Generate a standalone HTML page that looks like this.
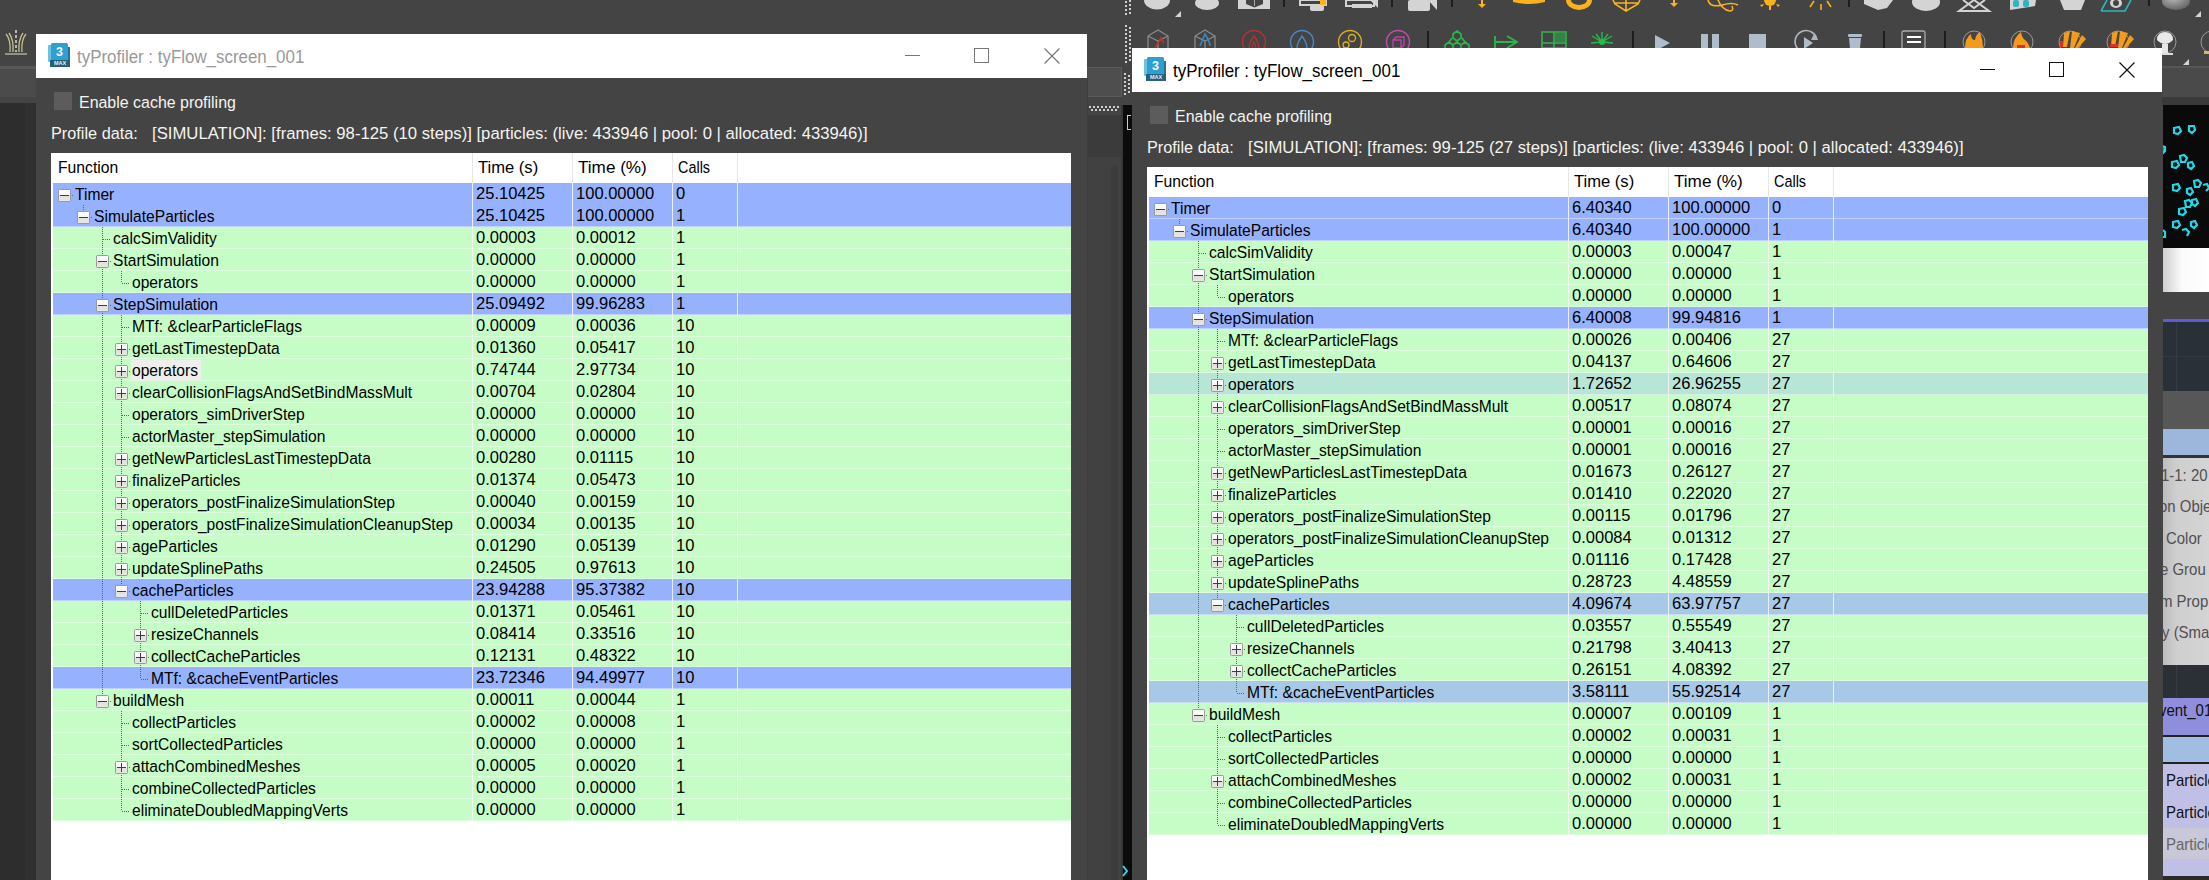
<!DOCTYPE html>
<html><head><meta charset="utf-8"><style>
*{margin:0;padding:0;box-sizing:border-box}
html,body{width:2209px;height:880px;overflow:hidden;background:#444;font-family:"Liberation Sans",sans-serif;position:relative}
.abs{position:absolute}
.win{position:absolute;background:#444;overflow:hidden}
.title{position:absolute;left:0;top:0;right:0;height:44px;background:#fff}
.logo{position:absolute;left:12px;top:9px;width:22px;height:24px}
.lg1{position:absolute;left:0;top:1.5px;width:5px;height:17px;background:#6cc0e0;border-radius:1px 0 0 1px}
.lg4{position:absolute;left:19px;top:4px;width:3px;height:20px;background:#2a7090}
.lg2{position:absolute;left:3px;top:0;width:17px;height:17.5px;background:#2d9fd0;color:#f4fbff;font-weight:bold;font-size:12.5px;text-align:center;line-height:19px;border-radius:1.5px 1.5px 0 0}
.lg3{position:absolute;left:2px;top:17px;width:20px;height:7px;background:#27607e;color:#e8f0f4;font-size:5.5px;font-weight:bold;text-align:center;line-height:7px}
.ttext{position:absolute;left:41px;top:12px;font-size:18.1px;line-height:22px;white-space:pre;transform:scaleX(.934);transform-origin:0 0}
.bmin{position:absolute;top:21px;width:15px;height:1px}
.bmax{position:absolute;top:14px;width:15px;height:15px;border:1px solid}
.bclose{position:absolute;top:14px}
.cb{position:absolute;left:18px;top:58px;width:18px;height:18px;background:#5c5c5c}
.cbl{position:absolute;left:42.5px;top:59px;font-size:16.8px;line-height:20px;color:#f4f4f0;white-space:pre;transform:scaleX(.95);transform-origin:0 0}
.pd{position:absolute;left:14.5px;top:89.5px;font-size:16.8px;line-height:20px;color:#f4f4f0;white-space:pre;transform:scaleX(.97);transform-origin:0 0}
.pd2{position:absolute;left:116px;top:89.5px;font-size:16.8px;line-height:20px;color:#f4f4f0;white-space:pre;transform:scaleX(.995);transform-origin:0 0}
.tbl{position:absolute;left:15px;top:119px;bottom:0;background:#fff;overflow:hidden}
.hdr{position:absolute;left:0;top:0;right:0;height:30px;background:#fff}
.htx{position:absolute;top:0;font-size:16.8px;line-height:29px;color:#000;white-space:pre;transform-origin:0 0}
.hs{position:absolute;top:0;width:1px;height:30px;background:#e6e6e6}
.colsep{position:absolute;top:30px;width:1px;height:638px;background:#f4f4f4;z-index:3;opacity:.9}
.row{position:absolute;left:2px;height:22px}
.sep{position:absolute;left:2px;height:1px;background:rgba(255,255,255,.4);z-index:1}
.tl{position:absolute;z-index:2}
.tl line{stroke:#5a6a5a;stroke-width:1;stroke-dasharray:1 1}
.bx{position:absolute;width:13px;height:13px;border:1px solid #9a9a9a;border-radius:1.5px;background:linear-gradient(#fefefe 0%,#f6f6f6 48%,#e2e0da 52%,#e8e6e0 100%);z-index:4}
.bx .h{position:absolute;left:1.25px;top:5px;width:8.5px;height:1.15px;background:#3a3c50}
.bx .v{position:absolute;left:4.95px;top:1.25px;width:1.15px;height:8.5px;background:#3a3c50}
.tx{position:absolute;height:22px;line-height:22px;color:#000;white-space:pre;z-index:5}
.focus{position:absolute;background:#ecefea;z-index:1}
.nm{font-size:16.8px;transform:scaleX(.93);transform-origin:0 0}
.rtx{font-size:17px;line-height:22px;color:#505050;white-space:pre;transform:scaleX(.88);transform-origin:0 0}
.num{font-size:16.8px;transform:scaleX(.985);transform-origin:0 0}
</style></head><body>
<!-- left strip -->
<div class="abs" style="left:0;top:66px;width:36px;height:3px;background:#575757"></div>
<div class="abs" style="left:0;top:69px;width:36px;height:28px;background:#4b4b4b"></div>
<div class="abs" style="left:0;top:97px;width:36px;height:6px;background:#454545"></div>
<div class="abs" style="left:0;top:103px;width:36px;height:777px;background:#2d2d2d"></div>
<div class="abs" style="left:25px;top:103px;width:11px;height:777px;background:#303030"></div>
<svg class="abs" style="left:0;top:28px" width="36" height="30">
 <g stroke="#c8c08a" stroke-width="1.3" fill="none">
  <path d="M6 6 Q11 12 10 24"/><path d="M9 5 Q14 12 13 24"/><path d="M26 6 Q21 12 22 24"/><path d="M23 5 Q18 12 19 24"/>
 </g>
 <path d="M16 2 V24" stroke="#ddd" stroke-width="1.5" stroke-dasharray="3 2"/>
 <path d="M5 26 H27" stroke="#c8c8b0" stroke-width="1.2"/>
</svg>
<!-- middle strip -->
<div class="abs" style="left:1087px;top:67px;width:35px;height:30px;background:#4e4e4e;border:1px solid #5a5a5a;border-left:none"></div>
<div class="abs" style="left:1087px;top:97px;width:35px;height:18px;background:#444"></div>
<div class="abs" style="left:1087px;top:115px;width:35px;height:42px;background:#3b3b3b"></div>
<div class="abs" style="left:1087px;top:157px;width:35px;height:723px;background:#414141"></div>
<div class="abs" style="left:1111px;top:165px;width:7px;height:715px;background:#3c3c3c;border-radius:3px"></div>
<div class="abs" style="left:1087px;top:78px;width:1px;height:802px;background:#3e3e3e"></div>
<div class="abs" style="left:1121px;top:105px;width:2px;height:775px;background:#373737"></div>
<div class="abs" style="left:1123px;top:105px;width:9px;height:775px;background:#0b0b0b"></div>
<div class="abs" style="left:1127px;top:115px;width:4px;height:15px;border:1px solid #ccc;border-right:none"></div>
<svg class="abs" style="left:0;top:0" width="1140" height="120"><path fill="#cfcfcf" d="M1125 1h2v2h-2zM1125 5h2v2h-2zM1125 9h2v2h-2zM1125 13h2v2h-2zM1129 0h2v2h-2zM1129 4h2v2h-2zM1129 8h2v2h-2zM1129 12h2v2h-2zM1125 25h2v2h-2zM1125 29h2v2h-2zM1125 33h2v2h-2zM1125 37h2v2h-2zM1125 41h2v2h-2zM1125 45h2v2h-2zM1125 49h2v2h-2zM1125 53h2v2h-2zM1125 57h2v2h-2zM1125 61h2v2h-2zM1129 27h2v2h-2zM1129 31h2v2h-2zM1129 35h2v2h-2zM1129 39h2v2h-2zM1129 43h2v2h-2zM1129 47h2v2h-2zM1129 51h2v2h-2zM1129 55h2v2h-2zM1129 59h2v2h-2zM1124 73h2v2h-2zM1124 77h2v2h-2zM1124 81h2v2h-2zM1124 85h2v2h-2zM1124 89h2v2h-2zM1124 93h2v2h-2zM1128 75h2v2h-2zM1128 79h2v2h-2zM1128 83h2v2h-2zM1128 87h2v2h-2zM1128 91h2v2h-2zM1089 106h2v2h-2zM1093 106h2v2h-2zM1097 106h2v2h-2zM1101 106h2v2h-2zM1105 106h2v2h-2zM1109 106h2v2h-2zM1113 106h2v2h-2zM1117 106h2v2h-2zM1091 109h2v2h-2zM1095 109h2v2h-2zM1099 109h2v2h-2zM1103 109h2v2h-2zM1107 109h2v2h-2zM1111 109h2v2h-2zM1115 109h2v2h-2z"/></svg>
<svg class="abs" style="left:1120px;top:864px" width="10" height="14"><path d="M3 2 L7 7 L3 12" stroke="#2ad8e8" stroke-width="2" fill="none"/></svg>
<!-- right strip -->
<div class="abs" style="left:2162px;top:66px;width:47px;height:2px;background:#565656"></div>
<div class="abs" style="left:2162px;top:68px;width:47px;height:29px;background:#4a4a4a"></div>
<div class="abs" style="left:2162px;top:97px;width:47px;height:8px;background:#3a3a3a"></div>
<div class="abs" style="left:2163px;top:105px;width:46px;height:143px;background:#0a0a0a"></div>
<svg class="abs" style="left:2163px;top:105px" width="46" height="143">
 <g stroke="#22d8e8" stroke-width="2.2" fill="none">
  <path d="M11 23l5-1 2 4-3 3-4-1z"/><path d="M26 21l5 0 1 4-3 3-3-2z"/>
  <path d="M-1 41l3 1 0 4-2 2z"/><path d="M9 57l5-1 2 4-3 3-4-1z"/><path d="M17 51l4-1 3 3-2 4-4 0z"/><path d="M25 58l4-1 2 4-3 3-3-2z"/>
  <path d="M10 80l5-1 2 4-3 3-4-1z"/><path d="M24 84l4-1 2 4-3 3-3-2z"/><path d="M31 76l4-1 3 3-2 4-4 0z"/><path d="M40 80l4-1 2 4-3 3"/>
  <path d="M16 104l5-1 2 4-3 3-4-1z"/><path d="M22 96l4-1 3 3-2 4-4 0z"/><path d="M29 95l4-1 2 4-3 3-3-2z"/>
  <path d="M10 117l5-1 2 4-3 3-4-1z"/><path d="M28 117l4-1 2 4-3 3-3-2z"/><path d="M19 125l4-1 3 3-2 4"/>
  <path d="M0 125l2 2 0 5-2 0"/>
 </g>
</svg>
<div class="abs" style="left:2163px;top:248px;width:46px;height:44px;background:linear-gradient(90deg,#cfcfcf,#fafafa 40%,#fff)"></div>
<div class="abs" style="left:2162px;top:292px;width:47px;height:27px;background:#444"></div>
<div class="abs" style="left:2163px;top:319px;width:46px;height:3px;background:#5f5ad8"></div>
<div class="abs" style="left:2163px;top:322px;width:46px;height:69px;background:#2a3037"></div>
<div class="abs" style="left:2176px;top:322px;width:1px;height:69px;background:#343b42"></div>
<div class="abs" style="left:2163px;top:356px;width:46px;height:1px;background:#343b42"></div>
<div class="abs" style="left:2163px;top:391px;width:46px;height:38px;background:#575757"></div>
<div class="abs" style="left:2163px;top:429px;width:46px;height:26px;background:#9cb6dc"></div>
<div class="abs" style="left:2163px;top:455px;width:46px;height:3px;background:#333"></div>
<div class="abs" style="left:2163px;top:458px;width:46px;height:207px;background:linear-gradient(90deg,#bdbdbd,#cfcfcf 30%,#d4d4d4)"></div>
<div class="abs rtx" style="top:465px;left:2161px">1-1: 20</div>
<div class="abs rtx" style="top:496px;left:2159px">on Obje</div>
<div class="abs rtx" style="top:528px;left:2166px">Color</div>
<div class="abs rtx" style="top:559px;left:2160px">e Grou</div>
<div class="abs rtx" style="top:591px;left:2160px">m Prop</div>
<div class="abs rtx" style="top:622px;left:2162px">y (Sma</div>
<div class="abs" style="left:2163px;top:665px;width:46px;height:33px;background:#2b3037"></div>
<div class="abs" style="left:2176px;top:665px;width:1px;height:33px;background:#343b42"></div>
<div class="abs" style="left:2163px;top:698px;width:46px;height:37px;background:#8e8edc"></div>
<div class="abs rtx" style="top:700px;left:2159px;color:#111">vent_01</div>
<div class="abs" style="left:2163px;top:735px;width:46px;height:2px;background:#222"></div>
<div class="abs" style="left:2163px;top:737px;width:46px;height:25px;background:#a2bde2"></div>
<div class="abs" style="left:2163px;top:762px;width:46px;height:2px;background:#222"></div>
<div class="abs" style="left:2163px;top:764px;width:46px;height:112px;background:#c0c0e6"></div>
<div class="abs" style="left:2163px;top:828px;width:46px;height:31px;background:#c8c8d8"></div>
<div class="abs rtx" style="top:770px;left:2166px;color:#111">Particle</div>
<div class="abs rtx" style="top:802px;left:2166px;color:#111">Particle</div>
<div class="abs rtx" style="top:834px;left:2166px;color:#666">Particle</div>
<div class="abs" style="left:2163px;top:876px;width:46px;height:4px;background:#2a2a2a"></div>

<!-- toolbar -->
<svg class="abs" style="left:1086px;top:0" width="1123" height="70">
 <g transform="translate(-1086,0)">
 <g fill="#d4d4d4">
  <ellipse cx="1157" cy="0" rx="13" ry="9.5"/>
  <path d="M1175 17 L1181 11 L1181 17z"/>
  <ellipse cx="1207" cy="3" rx="12" ry="7"/>
  <rect x="1238" y="0" width="32" height="9"/>
  <path d="M1300 0h26v5h-26z" fill="none" stroke="#d4d4d4" stroke-width="2"/>
  <rect x="1310" y="5" width="14" height="6" rx="2"/>
  <path d="M1346 0h28v6h-28z" fill="none" stroke="#d4d4d4" stroke-width="2"/>
  <path d="M1352 4h20v4h-20z"/><path d="M1370 0l8 8v-8z"/>
  <rect x="1408" y="0" width="22" height="11" rx="2"/><path d="M1428 0l9 10v-10z"/>
  <path d="M1864 0h29l-6 8-9 2-14-6z"/>
  <ellipse cx="1926" cy="2" rx="14" ry="9"/>
  <path d="M2060 0h25l-4 10h-17z"/>
  <path d="M2195 17 L2201 11 L2201 17z"/>
  <path d="M2183 65 L2189 59 L2189 65z"/>
 </g>
 <path d="M1246 0h17v4l-8.5 3.5-8.5-3.5z" fill="#444"/>
 <path d="M1254.5 0 v6" stroke="#aaa" stroke-width="1"/>
 <rect x="1320" y="0" width="6" height="5" fill="#fbb21c"/>
 <g stroke="#111" stroke-width="1.5"><path d="M1284 0v7M1392 0v7M1452 0v7M1849 0v7M2149 0v6M1428 31v17M1633 31v17M1884 31v17M1945 31v17"/></g>
 <g fill="#fbb21c" stroke="none">
  <path d="M1481 0h2v4h3l-4 4-4-4h3z"/>
  <path d="M1513 0h32v2q-16 4-32 0z"/>
  <path d="M1566 0a13 10 0 0 0 26 0h-5a8 5 0 0 1-16 0z"/>
  <path d="M1673 0h2v3h3l-4 4-4-4h3z"/>
  <circle cx="1770" cy="0" r="6"/>
  <path d="M1760 5l4-1-2 3zM1780 5l-4-1 2 3zM1769 6h2v4h-2z"/>
 </g>
 <g stroke="#fbb21c" stroke-width="1.6" fill="none">
  <path d="M1613 0l2 4 11 7 12-7 2-4M1626 0v11M1615 3h23"/>
  <path d="M1708 0q2 8 14 5q10-3 16 0 M1718 0q4 10 12 11 q4 0 2-5"/>
  <path d="M1810 7l4-6M1821 10v-6M1831 7l-4-6"/>
 </g>
 <path d="M1959 11 L1974 0 L1989 11z M1963 0 l11 8 11-8" stroke="#d4d4d4" stroke-width="2" fill="none"/>
 <path d="M2010 0h26l-1 6-25 4z" fill="#d4d4d4"/><rect x="2013" y="0" width="6" height="7" rx="2" fill="#2fb5c0"/><rect x="2023" y="0" width="6" height="7" rx="2" fill="#2fb5c0"/>
 <path d="M2101 11 l6 -11 M2101 11 h24 l6 -11" stroke="#2fb5c0" stroke-width="1.6" fill="none"/><ellipse cx="2116" cy="3" rx="6" ry="5" fill="#d4d4d4"/><ellipse cx="2116" cy="3" rx="3" ry="3" fill="#444"/>
 <radialGradient id="sph" cx="0.4" cy="0.3" r="0.7"><stop offset="0" stop-color="#bbb"/><stop offset="1" stop-color="#666"/></radialGradient>
 <ellipse cx="2176" cy="1" rx="14" ry="9" fill="url(#sph)"/>
 <!-- row 2 -->
 <g fill="none" stroke-width="1.3">
  <path d="M1148 36l10-6 10 6v14M1148 36v14M1148 36l10 5 10-5M1158 41v9" stroke="#8a8a8a"/>
  <path d="M1155 48l6-10 3 5" stroke="#c0322a" stroke-width="1.6"/>
  <path d="M1195 36l10-6 10 6v14M1195 36v14M1195 36l10 5 10-5M1205 41v9" stroke="#8a8a8a"/>
  <path d="M1200 46q5-12 5-12q5 8 5 12" stroke="#3a84c8" stroke-width="1.6"/>
  <circle cx="1254" cy="42" r="11.5" stroke="#b83232" stroke-width="1.4"/><path d="M1249 50q0-8 5-14q5 6 5 14M1252 50q0-5 2-8q2 3 2 8" stroke="#b83232" stroke-width="1.3"/>
  <circle cx="1302" cy="42" r="11.5" stroke="#4a88c8" stroke-width="1.4"/><path d="M1297 48q0-5 5-12q5 7 5 12q-5 4-10 0" stroke="#4a88c8" stroke-width="1.3"/>
  <circle cx="1350" cy="42" r="11.5" stroke="#d8b020" stroke-width="1.4"/><circle cx="1352" cy="38" r="3.5" stroke="#e0b020"/><circle cx="1346" cy="45" r="3" stroke="#e0b020"/>
  <circle cx="1398" cy="42" r="11.5" stroke="#c050a8" stroke-width="1.4"/><path d="M1393 40h8v8h-8zM1393 40l3-3h8v8l-3 3" stroke="#c040b0"/>
  <path d="M1457 31l4 3v4l-4 3-4-3v-4zM1449 42l4 3v4l-4 3-4-3v-4zM1457 42l4 3v4l-4 3-4-3v-4zM1465 42l4 3v4l-4 3-4-3v-4zM1452 38l-3 4M1462 38l3 4" stroke="#2ab84a" stroke-width="1.6"/>
  <path d="M1495 36v12M1495 42h22M1507 36l10 6-10 6" stroke="#2ab84a" stroke-width="1.8"/>
  <path d="M1542 32h24v16h-24zM1554 32v16M1542 43h24" stroke="#2ab84a" stroke-width="1.6"/>
  <path d="M1602 32v10M1592 36l10 6M1612 36l-10 6M1591 43l11-1M1613 43l-11-1M1596 34l6 8M1608 34l-6 8" stroke="#2ab84a" stroke-width="1.4"/>
 </g>
 <rect x="1555" y="33" width="10" height="9" fill="#2ab84a" opacity=".5"/><circle cx="1602" cy="42" r="3" fill="#2ab84a"/>
 <g fill="#aebccb">
  <path d="M1655 35l15 8-15 8z"/>
  <rect x="1701" y="34" width="7" height="14"/><rect x="1712" y="34" width="7" height="14"/>
  <rect x="1749" y="34" width="17" height="14"/>
  <path d="M1804 37l9 6-9 6z"/>
  <rect x="1848" y="34" width="14" height="3" rx="1"/><path d="M1849 38h12l-1 10h-10z"/>
 </g>
 <path d="M1817 40a11 11 0 1 0 -2 8" stroke="#aeb6bf" stroke-width="1.6" fill="none"/><path d="M1814 34l4 6-7 0z" fill="#aeb6bf"/>
 <rect x="1902" y="31" width="23" height="18" rx="2" fill="none" stroke="#aaa" stroke-width="1.3"/>
 <path d="M1907 37h14M1907 42h14" stroke="#fff" stroke-width="2"/>
 <g>
  <circle cx="1974" cy="42" r="11" fill="none" stroke="#999" stroke-width="1"/><path d="M1965 48q0-10 6-14q0 6 4 6q1-6 5-8q3 8 3 16z" fill="#f59a1a"/>
  <circle cx="2022" cy="42" r="11" fill="none" stroke="#999" stroke-width="1"/><path d="M2013 48q0-10 8-16q1 6 4 8q3 2 5 8z" fill="#f59a1a"/><rect x="2017" y="45" width="8" height="3" fill="#e03020"/>
  <circle cx="2070" cy="42" r="11" fill="none" stroke="#999" stroke-width="1"/><path d="M2064 33l6 -2-3 16h-4zM2072 31l8 2-6 15h-4zM2082 35l4 4-8 9h-3z" fill="#f59a1a"/><rect x="2060" y="41" width="3" height="6" fill="#e03020"/>
  <circle cx="2118" cy="42" r="11" fill="none" stroke="#999" stroke-width="1"/><path d="M2112 33l6 -2-3 16h-4zM2120 31l8 2-6 15h-4zM2130 35l4 4-8 9h-3z" fill="#f59a1a"/><rect x="2110" y="44" width="8" height="3" fill="#e03020"/>
  <circle cx="2165" cy="42" r="11" fill="none" stroke="#999" stroke-width="1"/><path d="M2157 40q0-8 8-8q8 0 8 8q-4 4-8 4q-4 0-8-4zM2162 44h6v9h-6z" fill="#e8e8e8"/><rect x="2157" y="53" width="16" height="2" fill="#ddd"/>
  <circle cx="2212" cy="42" r="11" fill="none" stroke="#999" stroke-width="1"/><rect x="2204" y="51" width="6" height="3" fill="#d8b070"/>
 </g>
 </g>
</svg>

<div class="win" style="left:36px;top:34px;width:1051px;height:846px">
<div class="title"><div class="logo"><div class="lg1"></div><div class="lg4"></div><div class="lg2">3</div><div class="lg3">MAX</div></div>
<div class="ttext" style="color:#999">tyProfiler : tyFlow_screen_001</div>
<div class="bmin" style="background:#777;left:869px"></div>
<div class="bmax" style="border-color:#777;left:938px"></div>
<svg class="bclose" style="left:1008px" width="16" height="16"><path d="M0.5 0.5L15.5 15.5M15.5 0.5L0.5 15.5" stroke="#777" stroke-width="1.2"/></svg>
</div>
<div class="cb"></div><div class="cbl">Enable cache profiling</div>
<div class="pd">Profile data:</div><div class="pd2">[SIMULATION]: [frames: 98-125 (10 steps)] [particles: (live: 433946 | pool: 0 | allocated: 433946)]</div>
<div class="tbl" style="width:1020px">
<div class="hdr"><div class="htx" style="left:7px;transform:scaleX(.936)">Function</div><div class="hs" style="left:421px"></div>
<div class="htx" style="left:427px;transform:scaleX(.988)">Time (s)</div><div class="hs" style="left:521px"></div>
<div class="htx" style="left:527px;transform:scaleX(1.02)">Time (%)</div><div class="hs" style="left:621px"></div>
<div class="htx" style="left:627px;transform:scaleX(.86)">Calls</div><div class="hs" style="left:686px"></div></div>
<div class="colsep" style="left:421px"></div><div class="colsep" style="left:521px"></div><div class="colsep" style="left:621px"></div><div class="colsep" style="left:686px"></div>
<div class="row" style="top:30px;background:#96b2ff;width:1018px"></div>
<div class="row" style="top:52px;background:#96b2ff;width:1018px"></div>
<div class="sep" style="top:73px;width:1018px"></div>
<div class="row" style="top:74px;background:#c6fdc6;width:1018px"></div>
<div class="sep" style="top:95px;width:1018px"></div>
<div class="row" style="top:96px;background:#c6fdc6;width:1018px"></div>
<div class="sep" style="top:117px;width:1018px"></div>
<div class="row" style="top:118px;background:#c6fdc6;width:1018px"></div>
<div class="sep" style="top:139px;width:1018px"></div>
<div class="row" style="top:140px;background:#96b2ff;width:1018px"></div>
<div class="sep" style="top:161px;width:1018px"></div>
<div class="row" style="top:162px;background:#c6fdc6;width:1018px"></div>
<div class="sep" style="top:183px;width:1018px"></div>
<div class="row" style="top:184px;background:#c6fdc6;width:1018px"></div>
<div class="sep" style="top:205px;width:1018px"></div>
<div class="row" style="top:206px;background:#c6fdc6;width:1018px"></div>
<div class="sep" style="top:227px;width:1018px"></div>
<div class="row" style="top:228px;background:#c6fdc6;width:1018px"></div>
<div class="sep" style="top:249px;width:1018px"></div>
<div class="row" style="top:250px;background:#c6fdc6;width:1018px"></div>
<div class="sep" style="top:271px;width:1018px"></div>
<div class="row" style="top:272px;background:#c6fdc6;width:1018px"></div>
<div class="sep" style="top:293px;width:1018px"></div>
<div class="row" style="top:294px;background:#c6fdc6;width:1018px"></div>
<div class="sep" style="top:315px;width:1018px"></div>
<div class="row" style="top:316px;background:#c6fdc6;width:1018px"></div>
<div class="sep" style="top:337px;width:1018px"></div>
<div class="row" style="top:338px;background:#c6fdc6;width:1018px"></div>
<div class="sep" style="top:359px;width:1018px"></div>
<div class="row" style="top:360px;background:#c6fdc6;width:1018px"></div>
<div class="sep" style="top:381px;width:1018px"></div>
<div class="row" style="top:382px;background:#c6fdc6;width:1018px"></div>
<div class="sep" style="top:403px;width:1018px"></div>
<div class="row" style="top:404px;background:#c6fdc6;width:1018px"></div>
<div class="sep" style="top:425px;width:1018px"></div>
<div class="row" style="top:426px;background:#96b2ff;width:1018px"></div>
<div class="sep" style="top:447px;width:1018px"></div>
<div class="row" style="top:448px;background:#c6fdc6;width:1018px"></div>
<div class="sep" style="top:469px;width:1018px"></div>
<div class="row" style="top:470px;background:#c6fdc6;width:1018px"></div>
<div class="sep" style="top:491px;width:1018px"></div>
<div class="row" style="top:492px;background:#c6fdc6;width:1018px"></div>
<div class="sep" style="top:513px;width:1018px"></div>
<div class="row" style="top:514px;background:#96b2ff;width:1018px"></div>
<div class="sep" style="top:535px;width:1018px"></div>
<div class="row" style="top:536px;background:#c6fdc6;width:1018px"></div>
<div class="sep" style="top:557px;width:1018px"></div>
<div class="row" style="top:558px;background:#c6fdc6;width:1018px"></div>
<div class="sep" style="top:579px;width:1018px"></div>
<div class="row" style="top:580px;background:#c6fdc6;width:1018px"></div>
<div class="sep" style="top:601px;width:1018px"></div>
<div class="row" style="top:602px;background:#c6fdc6;width:1018px"></div>
<div class="sep" style="top:623px;width:1018px"></div>
<div class="row" style="top:624px;background:#c6fdc6;width:1018px"></div>
<div class="sep" style="top:645px;width:1018px"></div>
<div class="row" style="top:646px;background:#c6fdc6;width:1018px"></div>
<div class="sep" style="top:667px;width:1018px"></div>
<svg class="tl" width="460" height="668" style="left:0;top:0"><line x1="32.5" y1="52" x2="32.5" y2="64"/><line x1="51.5" y1="74" x2="51.5" y2="86"/><line x1="51.5" y1="86" x2="51.5" y2="108"/><line x1="70.5" y1="118" x2="70.5" y2="130"/><line x1="51.5" y1="108" x2="51.5" y2="152"/><line x1="70.5" y1="162" x2="70.5" y2="174"/><line x1="70.5" y1="174" x2="70.5" y2="196"/><line x1="70.5" y1="196" x2="70.5" y2="218"/><line x1="70.5" y1="218" x2="70.5" y2="240"/><line x1="70.5" y1="240" x2="70.5" y2="262"/><line x1="70.5" y1="262" x2="70.5" y2="284"/><line x1="70.5" y1="284" x2="70.5" y2="306"/><line x1="70.5" y1="306" x2="70.5" y2="328"/><line x1="70.5" y1="328" x2="70.5" y2="350"/><line x1="70.5" y1="350" x2="70.5" y2="372"/><line x1="70.5" y1="372" x2="70.5" y2="394"/><line x1="70.5" y1="394" x2="70.5" y2="416"/><line x1="70.5" y1="416" x2="70.5" y2="438"/><line x1="89.5" y1="448" x2="89.5" y2="460"/><line x1="89.5" y1="460" x2="89.5" y2="482"/><line x1="89.5" y1="482" x2="89.5" y2="504"/><line x1="89.5" y1="504" x2="89.5" y2="526"/><line x1="51.5" y1="152" x2="51.5" y2="548"/><line x1="70.5" y1="558" x2="70.5" y2="570"/><line x1="70.5" y1="570" x2="70.5" y2="592"/><line x1="70.5" y1="592" x2="70.5" y2="614"/><line x1="70.5" y1="614" x2="70.5" y2="636"/><line x1="70.5" y1="636" x2="70.5" y2="658"/><rect x="40" y="64" width="1" height="1" fill="#5a6a5a"/><line x1="52" y1="86.5" x2="60" y2="86.5"/><rect x="59" y="108" width="1" height="1" fill="#5a6a5a"/><line x1="71" y1="130.5" x2="79" y2="130.5"/><rect x="59" y="152" width="1" height="1" fill="#5a6a5a"/><line x1="71" y1="174.5" x2="79" y2="174.5"/><rect x="78" y="196" width="1" height="1" fill="#5a6a5a"/><rect x="78" y="218" width="1" height="1" fill="#5a6a5a"/><rect x="78" y="240" width="1" height="1" fill="#5a6a5a"/><line x1="71" y1="262.5" x2="79" y2="262.5"/><line x1="71" y1="284.5" x2="79" y2="284.5"/><rect x="78" y="306" width="1" height="1" fill="#5a6a5a"/><rect x="78" y="328" width="1" height="1" fill="#5a6a5a"/><rect x="78" y="350" width="1" height="1" fill="#5a6a5a"/><rect x="78" y="372" width="1" height="1" fill="#5a6a5a"/><rect x="78" y="394" width="1" height="1" fill="#5a6a5a"/><rect x="78" y="416" width="1" height="1" fill="#5a6a5a"/><rect x="78" y="438" width="1" height="1" fill="#5a6a5a"/><line x1="90" y1="460.5" x2="98" y2="460.5"/><rect x="97" y="482" width="1" height="1" fill="#5a6a5a"/><rect x="97" y="504" width="1" height="1" fill="#5a6a5a"/><line x1="90" y1="526.5" x2="98" y2="526.5"/><rect x="59" y="548" width="1" height="1" fill="#5a6a5a"/><line x1="71" y1="570.5" x2="79" y2="570.5"/><line x1="71" y1="592.5" x2="79" y2="592.5"/><rect x="78" y="614" width="1" height="1" fill="#5a6a5a"/><line x1="71" y1="636.5" x2="79" y2="636.5"/><line x1="71" y1="658.5" x2="79" y2="658.5"/><rect x="21" y="42" width="1" height="1" fill="#5a6a5a"/></svg>
<div class="bx" style="left:7px;top:36px"><i class="h"></i></div>
<div class="tx nm" style="left:24.25px;top:31px">Timer</div>
<div class="tx num" style="left:425px;top:29.5px">25.10425</div>
<div class="tx num" style="left:525px;top:29.5px">100.00000</div>
<div class="tx num" style="left:625px;top:29.5px">0</div>
<div class="bx" style="left:26px;top:58px"><i class="h"></i></div>
<div class="tx nm" style="left:43.25px;top:53px">SimulateParticles</div>
<div class="tx num" style="left:425px;top:51.5px">25.10425</div>
<div class="tx num" style="left:525px;top:51.5px">100.00000</div>
<div class="tx num" style="left:625px;top:51.5px">1</div>
<div class="tx nm" style="left:62.25px;top:75px">calcSimValidity</div>
<div class="tx num" style="left:425px;top:73.5px">0.00003</div>
<div class="tx num" style="left:525px;top:73.5px">0.00012</div>
<div class="tx num" style="left:625px;top:73.5px">1</div>
<div class="bx" style="left:45px;top:102px"><i class="h"></i></div>
<div class="tx nm" style="left:62.25px;top:97px">StartSimulation</div>
<div class="tx num" style="left:425px;top:95.5px">0.00000</div>
<div class="tx num" style="left:525px;top:95.5px">0.00000</div>
<div class="tx num" style="left:625px;top:95.5px">1</div>
<div class="tx nm" style="left:81.25px;top:119px">operators</div>
<div class="tx num" style="left:425px;top:117.5px">0.00000</div>
<div class="tx num" style="left:525px;top:117.5px">0.00000</div>
<div class="tx num" style="left:625px;top:117.5px">1</div>
<div class="bx" style="left:45px;top:146px"><i class="h"></i></div>
<div class="tx nm" style="left:62.25px;top:141px">StepSimulation</div>
<div class="tx num" style="left:425px;top:139.5px">25.09492</div>
<div class="tx num" style="left:525px;top:139.5px">99.96283</div>
<div class="tx num" style="left:625px;top:139.5px">1</div>
<div class="tx nm" style="left:81.25px;top:163px">MTf: &amp;clearParticleFlags</div>
<div class="tx num" style="left:425px;top:161.5px">0.00009</div>
<div class="tx num" style="left:525px;top:161.5px">0.00036</div>
<div class="tx num" style="left:625px;top:161.5px">10</div>
<div class="bx" style="left:64px;top:190px"><i class="h"></i><i class="v"></i></div>
<div class="tx nm" style="left:81.25px;top:185px">getLastTimestepData</div>
<div class="tx num" style="left:425px;top:183.5px">0.01360</div>
<div class="tx num" style="left:525px;top:183.5px">0.05417</div>
<div class="tx num" style="left:625px;top:183.5px">10</div>
<div class="bx" style="left:64px;top:212px"><i class="h"></i><i class="v"></i></div>
<div class="focus" style="left:80px;top:207px;width:70px;height:21px"></div>
<div class="tx nm" style="left:81.25px;top:207px">operators</div>
<div class="tx num" style="left:425px;top:205.5px">0.74744</div>
<div class="tx num" style="left:525px;top:205.5px">2.97734</div>
<div class="tx num" style="left:625px;top:205.5px">10</div>
<div class="bx" style="left:64px;top:234px"><i class="h"></i><i class="v"></i></div>
<div class="tx nm" style="left:81.25px;top:229px">clearCollisionFlagsAndSetBindMassMult</div>
<div class="tx num" style="left:425px;top:227.5px">0.00704</div>
<div class="tx num" style="left:525px;top:227.5px">0.02804</div>
<div class="tx num" style="left:625px;top:227.5px">10</div>
<div class="tx nm" style="left:81.25px;top:251px">operators_simDriverStep</div>
<div class="tx num" style="left:425px;top:249.5px">0.00000</div>
<div class="tx num" style="left:525px;top:249.5px">0.00000</div>
<div class="tx num" style="left:625px;top:249.5px">10</div>
<div class="tx nm" style="left:81.25px;top:273px">actorMaster_stepSimulation</div>
<div class="tx num" style="left:425px;top:271.5px">0.00000</div>
<div class="tx num" style="left:525px;top:271.5px">0.00000</div>
<div class="tx num" style="left:625px;top:271.5px">10</div>
<div class="bx" style="left:64px;top:300px"><i class="h"></i><i class="v"></i></div>
<div class="tx nm" style="left:81.25px;top:295px">getNewParticlesLastTimestepData</div>
<div class="tx num" style="left:425px;top:293.5px">0.00280</div>
<div class="tx num" style="left:525px;top:293.5px">0.01115</div>
<div class="tx num" style="left:625px;top:293.5px">10</div>
<div class="bx" style="left:64px;top:322px"><i class="h"></i><i class="v"></i></div>
<div class="tx nm" style="left:81.25px;top:317px">finalizeParticles</div>
<div class="tx num" style="left:425px;top:315.5px">0.01374</div>
<div class="tx num" style="left:525px;top:315.5px">0.05473</div>
<div class="tx num" style="left:625px;top:315.5px">10</div>
<div class="bx" style="left:64px;top:344px"><i class="h"></i><i class="v"></i></div>
<div class="tx nm" style="left:81.25px;top:339px">operators_postFinalizeSimulationStep</div>
<div class="tx num" style="left:425px;top:337.5px">0.00040</div>
<div class="tx num" style="left:525px;top:337.5px">0.00159</div>
<div class="tx num" style="left:625px;top:337.5px">10</div>
<div class="bx" style="left:64px;top:366px"><i class="h"></i><i class="v"></i></div>
<div class="tx nm" style="left:81.25px;top:361px">operators_postFinalizeSimulationCleanupStep</div>
<div class="tx num" style="left:425px;top:359.5px">0.00034</div>
<div class="tx num" style="left:525px;top:359.5px">0.00135</div>
<div class="tx num" style="left:625px;top:359.5px">10</div>
<div class="bx" style="left:64px;top:388px"><i class="h"></i><i class="v"></i></div>
<div class="tx nm" style="left:81.25px;top:383px">ageParticles</div>
<div class="tx num" style="left:425px;top:381.5px">0.01290</div>
<div class="tx num" style="left:525px;top:381.5px">0.05139</div>
<div class="tx num" style="left:625px;top:381.5px">10</div>
<div class="bx" style="left:64px;top:410px"><i class="h"></i><i class="v"></i></div>
<div class="tx nm" style="left:81.25px;top:405px">updateSplinePaths</div>
<div class="tx num" style="left:425px;top:403.5px">0.24505</div>
<div class="tx num" style="left:525px;top:403.5px">0.97613</div>
<div class="tx num" style="left:625px;top:403.5px">10</div>
<div class="bx" style="left:64px;top:432px"><i class="h"></i></div>
<div class="tx nm" style="left:81.25px;top:427px">cacheParticles</div>
<div class="tx num" style="left:425px;top:425.5px">23.94288</div>
<div class="tx num" style="left:525px;top:425.5px">95.37382</div>
<div class="tx num" style="left:625px;top:425.5px">10</div>
<div class="tx nm" style="left:100.25px;top:449px">cullDeletedParticles</div>
<div class="tx num" style="left:425px;top:447.5px">0.01371</div>
<div class="tx num" style="left:525px;top:447.5px">0.05461</div>
<div class="tx num" style="left:625px;top:447.5px">10</div>
<div class="bx" style="left:83px;top:476px"><i class="h"></i><i class="v"></i></div>
<div class="tx nm" style="left:100.25px;top:471px">resizeChannels</div>
<div class="tx num" style="left:425px;top:469.5px">0.08414</div>
<div class="tx num" style="left:525px;top:469.5px">0.33516</div>
<div class="tx num" style="left:625px;top:469.5px">10</div>
<div class="bx" style="left:83px;top:498px"><i class="h"></i><i class="v"></i></div>
<div class="tx nm" style="left:100.25px;top:493px">collectCacheParticles</div>
<div class="tx num" style="left:425px;top:491.5px">0.12131</div>
<div class="tx num" style="left:525px;top:491.5px">0.48322</div>
<div class="tx num" style="left:625px;top:491.5px">10</div>
<div class="tx nm" style="left:100.25px;top:515px">MTf: &amp;cacheEventParticles</div>
<div class="tx num" style="left:425px;top:513.5px">23.72346</div>
<div class="tx num" style="left:525px;top:513.5px">94.49977</div>
<div class="tx num" style="left:625px;top:513.5px">10</div>
<div class="bx" style="left:45px;top:542px"><i class="h"></i></div>
<div class="tx nm" style="left:62.25px;top:537px">buildMesh</div>
<div class="tx num" style="left:425px;top:535.5px">0.00011</div>
<div class="tx num" style="left:525px;top:535.5px">0.00044</div>
<div class="tx num" style="left:625px;top:535.5px">1</div>
<div class="tx nm" style="left:81.25px;top:559px">collectParticles</div>
<div class="tx num" style="left:425px;top:557.5px">0.00002</div>
<div class="tx num" style="left:525px;top:557.5px">0.00008</div>
<div class="tx num" style="left:625px;top:557.5px">1</div>
<div class="tx nm" style="left:81.25px;top:581px">sortCollectedParticles</div>
<div class="tx num" style="left:425px;top:579.5px">0.00000</div>
<div class="tx num" style="left:525px;top:579.5px">0.00000</div>
<div class="tx num" style="left:625px;top:579.5px">1</div>
<div class="bx" style="left:64px;top:608px"><i class="h"></i><i class="v"></i></div>
<div class="tx nm" style="left:81.25px;top:603px">attachCombinedMeshes</div>
<div class="tx num" style="left:425px;top:601.5px">0.00005</div>
<div class="tx num" style="left:525px;top:601.5px">0.00020</div>
<div class="tx num" style="left:625px;top:601.5px">1</div>
<div class="tx nm" style="left:81.25px;top:625px">combineCollectedParticles</div>
<div class="tx num" style="left:425px;top:623.5px">0.00000</div>
<div class="tx num" style="left:525px;top:623.5px">0.00000</div>
<div class="tx num" style="left:625px;top:623.5px">1</div>
<div class="tx nm" style="left:81.25px;top:647px">eliminateDoubledMappingVerts</div>
<div class="tx num" style="left:425px;top:645.5px">0.00000</div>
<div class="tx num" style="left:525px;top:645.5px">0.00000</div>
<div class="tx num" style="left:625px;top:645.5px">1</div>
</div>
</div>
<div class="win" style="left:1132px;top:48px;width:1030px;height:832px">
<div class="title"><div class="logo"><div class="lg1"></div><div class="lg4"></div><div class="lg2">3</div><div class="lg3">MAX</div></div>
<div class="ttext" style="color:#000">tyProfiler : tyFlow_screen_001</div>
<div class="bmin" style="background:#111;left:848px"></div>
<div class="bmax" style="border-color:#111;left:917px"></div>
<svg class="bclose" style="left:987px" width="16" height="16"><path d="M0.5 0.5L15.5 15.5M15.5 0.5L0.5 15.5" stroke="#111" stroke-width="1.2"/></svg>
</div>
<div class="cb"></div><div class="cbl">Enable cache profiling</div>
<div class="pd">Profile data:</div><div class="pd2">[SIMULATION]: [frames: 99-125 (27 steps)] [particles: (live: 433946 | pool: 0 | allocated: 433946)]</div>
<div class="tbl" style="width:1001px">
<div class="hdr"><div class="htx" style="left:7px;transform:scaleX(.936)">Function</div><div class="hs" style="left:421px"></div>
<div class="htx" style="left:427px;transform:scaleX(.988)">Time (s)</div><div class="hs" style="left:521px"></div>
<div class="htx" style="left:527px;transform:scaleX(1.02)">Time (%)</div><div class="hs" style="left:621px"></div>
<div class="htx" style="left:627px;transform:scaleX(.86)">Calls</div><div class="hs" style="left:686px"></div></div>
<div class="colsep" style="left:421px"></div><div class="colsep" style="left:521px"></div><div class="colsep" style="left:621px"></div><div class="colsep" style="left:686px"></div>
<div class="row" style="top:30px;background:#96b2ff;width:999px"></div>
<div class="sep" style="top:51px;width:999px"></div>
<div class="row" style="top:52px;background:#96b2ff;width:999px"></div>
<div class="sep" style="top:73px;width:999px"></div>
<div class="row" style="top:74px;background:#c6fdc6;width:999px"></div>
<div class="sep" style="top:95px;width:999px"></div>
<div class="row" style="top:96px;background:#c6fdc6;width:999px"></div>
<div class="sep" style="top:117px;width:999px"></div>
<div class="row" style="top:118px;background:#c6fdc6;width:999px"></div>
<div class="sep" style="top:139px;width:999px"></div>
<div class="row" style="top:140px;background:#96b2ff;width:999px"></div>
<div class="sep" style="top:161px;width:999px"></div>
<div class="row" style="top:162px;background:#c6fdc6;width:999px"></div>
<div class="sep" style="top:183px;width:999px"></div>
<div class="row" style="top:184px;background:#c6fdc6;width:999px"></div>
<div class="sep" style="top:205px;width:999px"></div>
<div class="row" style="top:206px;background:#b8e6d6;width:999px"></div>
<div class="sep" style="top:227px;width:999px"></div>
<div class="row" style="top:228px;background:#c6fdc6;width:999px"></div>
<div class="sep" style="top:249px;width:999px"></div>
<div class="row" style="top:250px;background:#c6fdc6;width:999px"></div>
<div class="sep" style="top:271px;width:999px"></div>
<div class="row" style="top:272px;background:#c6fdc6;width:999px"></div>
<div class="sep" style="top:293px;width:999px"></div>
<div class="row" style="top:294px;background:#c6fdc6;width:999px"></div>
<div class="sep" style="top:315px;width:999px"></div>
<div class="row" style="top:316px;background:#c6fdc6;width:999px"></div>
<div class="sep" style="top:337px;width:999px"></div>
<div class="row" style="top:338px;background:#c6fdc6;width:999px"></div>
<div class="sep" style="top:359px;width:999px"></div>
<div class="row" style="top:360px;background:#c6fdc6;width:999px"></div>
<div class="sep" style="top:381px;width:999px"></div>
<div class="row" style="top:382px;background:#c6fdc6;width:999px"></div>
<div class="sep" style="top:403px;width:999px"></div>
<div class="row" style="top:404px;background:#c6fdc6;width:999px"></div>
<div class="sep" style="top:425px;width:999px"></div>
<div class="row" style="top:426px;background:#a8c8e8;width:999px"></div>
<div class="sep" style="top:447px;width:999px"></div>
<div class="row" style="top:448px;background:#c6fdc6;width:999px"></div>
<div class="sep" style="top:469px;width:999px"></div>
<div class="row" style="top:470px;background:#c6fdc6;width:999px"></div>
<div class="sep" style="top:491px;width:999px"></div>
<div class="row" style="top:492px;background:#c6fdc6;width:999px"></div>
<div class="sep" style="top:513px;width:999px"></div>
<div class="row" style="top:514px;background:#a8c8e8;width:999px"></div>
<div class="sep" style="top:535px;width:999px"></div>
<div class="row" style="top:536px;background:#c6fdc6;width:999px"></div>
<div class="sep" style="top:557px;width:999px"></div>
<div class="row" style="top:558px;background:#c6fdc6;width:999px"></div>
<div class="sep" style="top:579px;width:999px"></div>
<div class="row" style="top:580px;background:#c6fdc6;width:999px"></div>
<div class="sep" style="top:601px;width:999px"></div>
<div class="row" style="top:602px;background:#c6fdc6;width:999px"></div>
<div class="sep" style="top:623px;width:999px"></div>
<div class="row" style="top:624px;background:#c6fdc6;width:999px"></div>
<div class="sep" style="top:645px;width:999px"></div>
<div class="row" style="top:646px;background:#c6fdc6;width:999px"></div>
<div class="sep" style="top:667px;width:999px"></div>
<svg class="tl" width="460" height="668" style="left:0;top:0"><line x1="32.5" y1="52" x2="32.5" y2="64"/><line x1="51.5" y1="74" x2="51.5" y2="86"/><line x1="51.5" y1="86" x2="51.5" y2="108"/><line x1="70.5" y1="118" x2="70.5" y2="130"/><line x1="51.5" y1="108" x2="51.5" y2="152"/><line x1="70.5" y1="162" x2="70.5" y2="174"/><line x1="70.5" y1="174" x2="70.5" y2="196"/><line x1="70.5" y1="196" x2="70.5" y2="218"/><line x1="70.5" y1="218" x2="70.5" y2="240"/><line x1="70.5" y1="240" x2="70.5" y2="262"/><line x1="70.5" y1="262" x2="70.5" y2="284"/><line x1="70.5" y1="284" x2="70.5" y2="306"/><line x1="70.5" y1="306" x2="70.5" y2="328"/><line x1="70.5" y1="328" x2="70.5" y2="350"/><line x1="70.5" y1="350" x2="70.5" y2="372"/><line x1="70.5" y1="372" x2="70.5" y2="394"/><line x1="70.5" y1="394" x2="70.5" y2="416"/><line x1="70.5" y1="416" x2="70.5" y2="438"/><line x1="89.5" y1="448" x2="89.5" y2="460"/><line x1="89.5" y1="460" x2="89.5" y2="482"/><line x1="89.5" y1="482" x2="89.5" y2="504"/><line x1="89.5" y1="504" x2="89.5" y2="526"/><line x1="51.5" y1="152" x2="51.5" y2="548"/><line x1="70.5" y1="558" x2="70.5" y2="570"/><line x1="70.5" y1="570" x2="70.5" y2="592"/><line x1="70.5" y1="592" x2="70.5" y2="614"/><line x1="70.5" y1="614" x2="70.5" y2="636"/><line x1="70.5" y1="636" x2="70.5" y2="658"/><rect x="40" y="64" width="1" height="1" fill="#5a6a5a"/><line x1="52" y1="86.5" x2="60" y2="86.5"/><rect x="59" y="108" width="1" height="1" fill="#5a6a5a"/><line x1="71" y1="130.5" x2="79" y2="130.5"/><rect x="59" y="152" width="1" height="1" fill="#5a6a5a"/><line x1="71" y1="174.5" x2="79" y2="174.5"/><rect x="78" y="196" width="1" height="1" fill="#5a6a5a"/><rect x="78" y="218" width="1" height="1" fill="#5a6a5a"/><rect x="78" y="240" width="1" height="1" fill="#5a6a5a"/><line x1="71" y1="262.5" x2="79" y2="262.5"/><line x1="71" y1="284.5" x2="79" y2="284.5"/><rect x="78" y="306" width="1" height="1" fill="#5a6a5a"/><rect x="78" y="328" width="1" height="1" fill="#5a6a5a"/><rect x="78" y="350" width="1" height="1" fill="#5a6a5a"/><rect x="78" y="372" width="1" height="1" fill="#5a6a5a"/><rect x="78" y="394" width="1" height="1" fill="#5a6a5a"/><rect x="78" y="416" width="1" height="1" fill="#5a6a5a"/><rect x="78" y="438" width="1" height="1" fill="#5a6a5a"/><line x1="90" y1="460.5" x2="98" y2="460.5"/><rect x="97" y="482" width="1" height="1" fill="#5a6a5a"/><rect x="97" y="504" width="1" height="1" fill="#5a6a5a"/><line x1="90" y1="526.5" x2="98" y2="526.5"/><rect x="59" y="548" width="1" height="1" fill="#5a6a5a"/><line x1="71" y1="570.5" x2="79" y2="570.5"/><line x1="71" y1="592.5" x2="79" y2="592.5"/><rect x="78" y="614" width="1" height="1" fill="#5a6a5a"/><line x1="71" y1="636.5" x2="79" y2="636.5"/><line x1="71" y1="658.5" x2="79" y2="658.5"/><rect x="21" y="42" width="1" height="1" fill="#5a6a5a"/></svg>
<div class="bx" style="left:7px;top:36px"><i class="h"></i></div>
<div class="tx nm" style="left:24.25px;top:31px">Timer</div>
<div class="tx num" style="left:425px;top:29.5px">6.40340</div>
<div class="tx num" style="left:525px;top:29.5px">100.00000</div>
<div class="tx num" style="left:625px;top:29.5px">0</div>
<div class="bx" style="left:26px;top:58px"><i class="h"></i></div>
<div class="tx nm" style="left:43.25px;top:53px">SimulateParticles</div>
<div class="tx num" style="left:425px;top:51.5px">6.40340</div>
<div class="tx num" style="left:525px;top:51.5px">100.00000</div>
<div class="tx num" style="left:625px;top:51.5px">1</div>
<div class="tx nm" style="left:62.25px;top:75px">calcSimValidity</div>
<div class="tx num" style="left:425px;top:73.5px">0.00003</div>
<div class="tx num" style="left:525px;top:73.5px">0.00047</div>
<div class="tx num" style="left:625px;top:73.5px">1</div>
<div class="bx" style="left:45px;top:102px"><i class="h"></i></div>
<div class="tx nm" style="left:62.25px;top:97px">StartSimulation</div>
<div class="tx num" style="left:425px;top:95.5px">0.00000</div>
<div class="tx num" style="left:525px;top:95.5px">0.00000</div>
<div class="tx num" style="left:625px;top:95.5px">1</div>
<div class="tx nm" style="left:81.25px;top:119px">operators</div>
<div class="tx num" style="left:425px;top:117.5px">0.00000</div>
<div class="tx num" style="left:525px;top:117.5px">0.00000</div>
<div class="tx num" style="left:625px;top:117.5px">1</div>
<div class="bx" style="left:45px;top:146px"><i class="h"></i></div>
<div class="tx nm" style="left:62.25px;top:141px">StepSimulation</div>
<div class="tx num" style="left:425px;top:139.5px">6.40008</div>
<div class="tx num" style="left:525px;top:139.5px">99.94816</div>
<div class="tx num" style="left:625px;top:139.5px">1</div>
<div class="tx nm" style="left:81.25px;top:163px">MTf: &amp;clearParticleFlags</div>
<div class="tx num" style="left:425px;top:161.5px">0.00026</div>
<div class="tx num" style="left:525px;top:161.5px">0.00406</div>
<div class="tx num" style="left:625px;top:161.5px">27</div>
<div class="bx" style="left:64px;top:190px"><i class="h"></i><i class="v"></i></div>
<div class="tx nm" style="left:81.25px;top:185px">getLastTimestepData</div>
<div class="tx num" style="left:425px;top:183.5px">0.04137</div>
<div class="tx num" style="left:525px;top:183.5px">0.64606</div>
<div class="tx num" style="left:625px;top:183.5px">27</div>
<div class="bx" style="left:64px;top:212px"><i class="h"></i><i class="v"></i></div>
<div class="tx nm" style="left:81.25px;top:207px">operators</div>
<div class="tx num" style="left:425px;top:205.5px">1.72652</div>
<div class="tx num" style="left:525px;top:205.5px">26.96255</div>
<div class="tx num" style="left:625px;top:205.5px">27</div>
<div class="bx" style="left:64px;top:234px"><i class="h"></i><i class="v"></i></div>
<div class="tx nm" style="left:81.25px;top:229px">clearCollisionFlagsAndSetBindMassMult</div>
<div class="tx num" style="left:425px;top:227.5px">0.00517</div>
<div class="tx num" style="left:525px;top:227.5px">0.08074</div>
<div class="tx num" style="left:625px;top:227.5px">27</div>
<div class="tx nm" style="left:81.25px;top:251px">operators_simDriverStep</div>
<div class="tx num" style="left:425px;top:249.5px">0.00001</div>
<div class="tx num" style="left:525px;top:249.5px">0.00016</div>
<div class="tx num" style="left:625px;top:249.5px">27</div>
<div class="tx nm" style="left:81.25px;top:273px">actorMaster_stepSimulation</div>
<div class="tx num" style="left:425px;top:271.5px">0.00001</div>
<div class="tx num" style="left:525px;top:271.5px">0.00016</div>
<div class="tx num" style="left:625px;top:271.5px">27</div>
<div class="bx" style="left:64px;top:300px"><i class="h"></i><i class="v"></i></div>
<div class="tx nm" style="left:81.25px;top:295px">getNewParticlesLastTimestepData</div>
<div class="tx num" style="left:425px;top:293.5px">0.01673</div>
<div class="tx num" style="left:525px;top:293.5px">0.26127</div>
<div class="tx num" style="left:625px;top:293.5px">27</div>
<div class="bx" style="left:64px;top:322px"><i class="h"></i><i class="v"></i></div>
<div class="tx nm" style="left:81.25px;top:317px">finalizeParticles</div>
<div class="tx num" style="left:425px;top:315.5px">0.01410</div>
<div class="tx num" style="left:525px;top:315.5px">0.22020</div>
<div class="tx num" style="left:625px;top:315.5px">27</div>
<div class="bx" style="left:64px;top:344px"><i class="h"></i><i class="v"></i></div>
<div class="tx nm" style="left:81.25px;top:339px">operators_postFinalizeSimulationStep</div>
<div class="tx num" style="left:425px;top:337.5px">0.00115</div>
<div class="tx num" style="left:525px;top:337.5px">0.01796</div>
<div class="tx num" style="left:625px;top:337.5px">27</div>
<div class="bx" style="left:64px;top:366px"><i class="h"></i><i class="v"></i></div>
<div class="tx nm" style="left:81.25px;top:361px">operators_postFinalizeSimulationCleanupStep</div>
<div class="tx num" style="left:425px;top:359.5px">0.00084</div>
<div class="tx num" style="left:525px;top:359.5px">0.01312</div>
<div class="tx num" style="left:625px;top:359.5px">27</div>
<div class="bx" style="left:64px;top:388px"><i class="h"></i><i class="v"></i></div>
<div class="tx nm" style="left:81.25px;top:383px">ageParticles</div>
<div class="tx num" style="left:425px;top:381.5px">0.01116</div>
<div class="tx num" style="left:525px;top:381.5px">0.17428</div>
<div class="tx num" style="left:625px;top:381.5px">27</div>
<div class="bx" style="left:64px;top:410px"><i class="h"></i><i class="v"></i></div>
<div class="tx nm" style="left:81.25px;top:405px">updateSplinePaths</div>
<div class="tx num" style="left:425px;top:403.5px">0.28723</div>
<div class="tx num" style="left:525px;top:403.5px">4.48559</div>
<div class="tx num" style="left:625px;top:403.5px">27</div>
<div class="bx" style="left:64px;top:432px"><i class="h"></i></div>
<div class="tx nm" style="left:81.25px;top:427px">cacheParticles</div>
<div class="tx num" style="left:425px;top:425.5px">4.09674</div>
<div class="tx num" style="left:525px;top:425.5px">63.97757</div>
<div class="tx num" style="left:625px;top:425.5px">27</div>
<div class="tx nm" style="left:100.25px;top:449px">cullDeletedParticles</div>
<div class="tx num" style="left:425px;top:447.5px">0.03557</div>
<div class="tx num" style="left:525px;top:447.5px">0.55549</div>
<div class="tx num" style="left:625px;top:447.5px">27</div>
<div class="bx" style="left:83px;top:476px"><i class="h"></i><i class="v"></i></div>
<div class="tx nm" style="left:100.25px;top:471px">resizeChannels</div>
<div class="tx num" style="left:425px;top:469.5px">0.21798</div>
<div class="tx num" style="left:525px;top:469.5px">3.40413</div>
<div class="tx num" style="left:625px;top:469.5px">27</div>
<div class="bx" style="left:83px;top:498px"><i class="h"></i><i class="v"></i></div>
<div class="tx nm" style="left:100.25px;top:493px">collectCacheParticles</div>
<div class="tx num" style="left:425px;top:491.5px">0.26151</div>
<div class="tx num" style="left:525px;top:491.5px">4.08392</div>
<div class="tx num" style="left:625px;top:491.5px">27</div>
<div class="tx nm" style="left:100.25px;top:515px">MTf: &amp;cacheEventParticles</div>
<div class="tx num" style="left:425px;top:513.5px">3.58111</div>
<div class="tx num" style="left:525px;top:513.5px">55.92514</div>
<div class="tx num" style="left:625px;top:513.5px">27</div>
<div class="bx" style="left:45px;top:542px"><i class="h"></i></div>
<div class="tx nm" style="left:62.25px;top:537px">buildMesh</div>
<div class="tx num" style="left:425px;top:535.5px">0.00007</div>
<div class="tx num" style="left:525px;top:535.5px">0.00109</div>
<div class="tx num" style="left:625px;top:535.5px">1</div>
<div class="tx nm" style="left:81.25px;top:559px">collectParticles</div>
<div class="tx num" style="left:425px;top:557.5px">0.00002</div>
<div class="tx num" style="left:525px;top:557.5px">0.00031</div>
<div class="tx num" style="left:625px;top:557.5px">1</div>
<div class="tx nm" style="left:81.25px;top:581px">sortCollectedParticles</div>
<div class="tx num" style="left:425px;top:579.5px">0.00000</div>
<div class="tx num" style="left:525px;top:579.5px">0.00000</div>
<div class="tx num" style="left:625px;top:579.5px">1</div>
<div class="bx" style="left:64px;top:608px"><i class="h"></i><i class="v"></i></div>
<div class="tx nm" style="left:81.25px;top:603px">attachCombinedMeshes</div>
<div class="tx num" style="left:425px;top:601.5px">0.00002</div>
<div class="tx num" style="left:525px;top:601.5px">0.00031</div>
<div class="tx num" style="left:625px;top:601.5px">1</div>
<div class="tx nm" style="left:81.25px;top:625px">combineCollectedParticles</div>
<div class="tx num" style="left:425px;top:623.5px">0.00000</div>
<div class="tx num" style="left:525px;top:623.5px">0.00000</div>
<div class="tx num" style="left:625px;top:623.5px">1</div>
<div class="tx nm" style="left:81.25px;top:647px">eliminateDoubledMappingVerts</div>
<div class="tx num" style="left:425px;top:645.5px">0.00000</div>
<div class="tx num" style="left:525px;top:645.5px">0.00000</div>
<div class="tx num" style="left:625px;top:645.5px">1</div>
</div>
</div>
</body></html>
